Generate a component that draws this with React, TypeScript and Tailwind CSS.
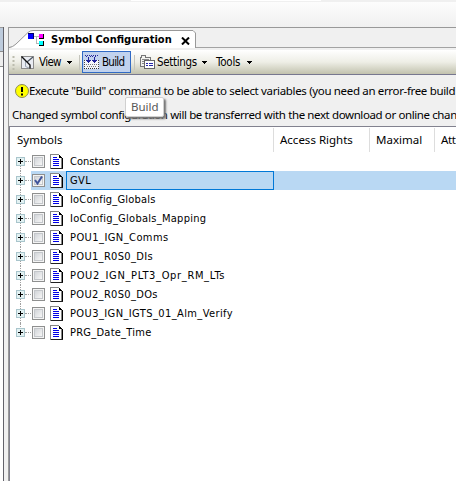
import React from "react";

function Arrow({ className = "" }: { className?: string }) {
  return (
    <svg width="5" height="3" viewBox="0 0 5 3" shapeRendering="crispEdges" className={"mt-px shrink-0 " + className}>
      <path d="M0 0h5v1h-1v1h-1v1h-1v-1h-1v-1h-1z" fill="#000" />
    </svg>
  );
}

function SymbolIcon() {
  return (
    <svg width="16" height="13" viewBox="0 0 16 13" shapeRendering="crispEdges" className="-mt-px shrink-0">
      <path d="M6 3.500h5M8.500 3v8M8 10.500h3" stroke="#b5b5b5" fill="none" />
      <rect width="6" height="6" fill="#00006a" />
      <rect width="5" height="5" y="1" fill="#0000ff" />
      <rect x="11" y="1" width="5" height="5" fill="#000" />
      <rect x="11" y="1" width="4" height="4" fill="#ff00ff" />
      <rect x="11" y="8" width="5" height="5" fill="#000" />
      <rect x="11" y="8" width="4" height="4" fill="#00ffff" />
    </svg>
  );
}

function ViewIcon() {
  return (
    <svg width="13" height="13" viewBox="0 0 13 13" className="shrink-0">
      <rect x=".5" y=".5" width="12" height="12" fill="#e9ecf2" stroke="#8c8c8c" />
      <path d="M6 6L12 1" stroke="#4b5560" strokeWidth="1.200" />
      <path d="M4.500 5V10.500L8 12" stroke="#9aa5b3" fill="none" />
      <path d="M.5 .5L9 9V12.500" stroke="#111" strokeWidth="1.400" fill="none" />
    </svg>
  );
}

function BuildIcon() {
  return (
    <svg width="15" height="14" viewBox="0 0 15 14" shapeRendering="crispEdges" className="shrink-0">
      <path d="M0 5h15v9H0z" fill="#f4f5fa" />
      <path d="M.5 5v9M14.500 5v9" fill="none" stroke="#444" strokeDasharray="1 1" />
      <path d="M0 13.500h15" stroke="#333" strokeDasharray="1 1" />
      <path d="M2 9.500h12M3 11.500h10" stroke="#777" strokeDasharray="1 1" />
      <path d="M1 .5h13M2 1.500h2M6 1.500h3M11 1.500h2" stroke="#28289b" strokeDasharray="1 1" />
      <path d="M4 2h1v3h2v1h-1v1h-1v1h-1v-1h-1v-1h-1v-1h2zM10 2h1v3h2v1h-1v1h-1v1h-1v-1h-1v-1h-1v-1h2z" fill="#22229c" />
    </svg>
  );
}

function SettingsIcon() {
  return (
    <svg width="15" height="14" viewBox="0 0 15 14" shapeRendering="crispEdges" className="shrink-0">
      <path d="M.5 11.500V2.500h1v-2h4v2h5v9z" fill="#f2f2ee" stroke="#777" />
      <path d="M2 4.500h7M2 6.500h3M2 8.500h3" stroke="#888" />
      <rect x="4.500" y="5.500" width="10" height="8" fill="#fff" stroke="#666" />
      <path d="M6 8.500h2M9 8.500h4M6 10.500h2M9 10.500h4" stroke="#2929a8" />
    </svg>
  );
}

function Doc() {
  return (
    <svg width="13" height="15" viewBox="0 0 13 15" shapeRendering="crispEdges" className="-mt-px shrink-0">
      <path d="M0 0h9v1h1v1h1v1h1v12H0z" fill="#858585" />
      <path d="M1 1h8v3h2v10H1z" fill="#fff" />
      <path d="M9 1h1v1h1v1h1v1h1v11h-1V4H9z" fill="#000" />
      <path d="M1 14h12v1H1z" fill="#222" />
      <path d="M3 3.500h4M3 5.500h6M3 7.500h6M3 9.500h6M3 11.500h6" stroke="#0000e8" />
    </svg>
  );
}

function Expander() {
  return (
    <svg width="9" height="9" viewBox="0 0 9 9" shapeRendering="crispEdges" className="relative shrink-0">
      <rect width="9" height="9" rx="1" fill="#a9c5cc" />
      <rect x="1" y="1" width="7" height="7" fill="#e2f1f2" />
      <path d="M2 4.500h5M4.500 2v5" stroke="#000" />
    </svg>
  );
}

function Check({ on }: { on: boolean }) {
  return (
    <span className="flex h-[13px] w-[13px] shrink-0 border border-[#8e8f8f] bg-[#f4f4f4] p-px">
      <span className="h-[9px] w-[9px] border border-[#c4c7cb] bg-linear-to-br from-[#d2d5d9] to-[#f6f6f6]">
        {on && (
          <svg width="9" height="9" viewBox="0 0 9 9" className="-ml-px -mt-px block">
            <path d="M1 4L3.500 7.500L8 .5" fill="none" stroke="#3f549b" strokeWidth="2" />
          </svg>
        )}
      </span>
    </span>
  );
}

const rows = [
  { name: "Constants", sp: "tracking-[0.02px]" },
  { name: "GVL", sp: "tracking-[0.4px]" },
  { name: "IoConfig_Globals", sp: "tracking-[0.2px]" },
  { name: "IoConfig_Globals_Mapping", sp: "tracking-[0.27px]" },
  { name: "POU1_IGN_Comms", sp: "tracking-[0.43px]" },
  { name: "POU1_R0S0_DIs", sp: "tracking-[0.33px]" },
  { name: "POU2_IGN_PLT3_Opr_RM_LTs", sp: "tracking-[0.66px]" },
  { name: "POU2_R0S0_DOs", sp: "tracking-[0.33px]" },
  { name: "POU3_IGN_IGTS_01_Alm_Verify", sp: "tracking-[0.4px]" },
  { name: "PRG_Date_Time", sp: "tracking-[0.25px]" },
];

function Tree() {
  return (
    <div className="font-['DejaVu_Sans_Condensed','DejaVu_Sans',sans-serif] text-[11px]">
      {rows.map((r, i) => {
        const on = i === 1;
        return (
          <div key={r.name} className="relative flex h-[19px] items-center pl-[6px]">
            <span className={"absolute left-[10px] border-l border-dotted border-[#a0a0a0] " + (i === 9 ? "top-0 h-[10px]" : i === 0 ? "top-[9px] h-[10px]" : "top-0 h-[19px]")} />
            <Expander />
            <span className="w-[6px] border-t border-dotted border-[#a0a0a0]" />
            <span className={"flex h-[19px] w-[35px] shrink-0 items-center gap-[5px] pl-px " + (on ? "bg-[#b9d8f3]" : "")}>
              <Check on={on} />
              <Doc />
            </span>
            <span className={"flex h-[19px] shrink-0 items-center whitespace-pre pt-[2px] " + r.sp + " " + (on ? "w-[208px] border border-[#0078d7] bg-[#b9d8f3] pl-[3px]" : "pl-[4px]")}>{r.name}</span>
            {on && <span className="h-[19px] flex-1 bg-[#b9d8f3]" />}
          </div>
        );
      })}
    </div>
  );
}

export default function App() {
  return (
    <div className="flex h-[481px] w-[456px] flex-col overflow-hidden bg-[#f0f0f0] font-['Noto_Sans',sans-serif] text-xs text-black">
      <div className="flex h-[2px] shrink-0"><span className="ml-[131px] h-px w-[190px] bg-white" /></div>
      <div className="h-[25px] shrink-0 bg-linear-to-b from-[#fdfdfd] to-[#f0f0f0]" />
      <div className="flex min-h-0 flex-1">
        <div className="flex w-[4px] shrink-0 flex-col border-r border-[#62626a] bg-white">
          <div className="h-[24px] border-t border-[#999] bg-[#bdcbdc]" />
          <div className="h-[16px] border-y border-[#8c8c8c] bg-[#eee]" />
        </div>
        <div className="w-[4px] shrink-0" />
        <div className="flex min-w-0 flex-1 flex-col border-l border-t border-[#999]">
          <div className="relative h-[20px] shrink-0 border-b border-[#a3a3a3]">
            <svg width="188" height="20" viewBox="0 0 188 20" className="absolute left-0 top-0">
              <path d="M0 20L5 18.500L19 4.500Q21 2.500 24 2.500H184L186.500 5V20Z" fill="#fff" />
              <path d="M0 19.500Q4 19 7 16L19 4.500Q21 2.500 24 2.500H184L186.500 5V20" fill="none" stroke="#999" />
            </svg>
            <div className="relative flex h-[20px] items-center pl-[19px] pt-[4px]">
              <SymbolIcon />
              <span className="ml-[7px] w-[122px] whitespace-pre font-['DejaVu_Sans_Condensed'] text-[11px] font-bold">Symbol Configuration</span>
              <svg width="9" height="8" viewBox="0 0 9 8" className="ml-[8px] mt-px"><path d="M1 .5L8 7.500M8 .5L1 7.500" stroke="#000" strokeWidth="2" /></svg>
            </div>
          </div>
          <div className="mt-[2px] flex h-[25px] shrink-0 items-center whitespace-pre border-b border-[#77778f] bg-linear-to-b from-white via-[#eeeee6] to-[#c2c2ae] font-['DejaVu_Sans_Condensed'] text-[11.5px]">
            <svg width="3" height="15" viewBox="0 0 3 15" className="ml-[3px] shrink-0"><path d="M1.500 1v14" stroke="#bcbcae" strokeWidth="2" strokeDasharray="2 2" /></svg>
            <span className="ml-[6px]"><ViewIcon /></span>
            <span className="ml-[5px] w-[22px] shrink-0 pt-px tracking-[-0.65px]">View</span>
            <Arrow className="ml-[6px]" />
            <span className="ml-[7px] h-[15px] w-px bg-[#c5c5bd]" />
            <span className="ml-[2px] flex h-[22px] w-[49px] shrink-0 items-center border border-[#316ac5] bg-[#c1d2ee] pl-px">
              <BuildIcon /><span className="ml-[3px] pt-px tracking-[-0.75px]">Build</span>
            </span>
            <span className="ml-[3px] h-[15px] w-px bg-[#c5c5bd]" />
            <span className="ml-[5px]"><SettingsIcon /></span>
            <span className="ml-[2px] w-[40px] shrink-0 pt-px tracking-[-0.32px]">Settings</span>
            <Arrow className="ml-[5px]" />
            <span className="ml-[9px] w-[26px] shrink-0 pt-px tracking-[-0.2px]">Tools</span>
            <Arrow className="ml-[5px]" />
          </div>
          <div className="relative h-[51px] shrink-0 whitespace-pre text-[11.5px]">
            <div className="flex h-[31px] items-center pl-[6px] tracking-[-0.34px]">
              <svg width="14" height="14" viewBox="0 0 14 14" className="shrink-0"><circle cx="7" cy="7" r="6.500" fill="#ffff00" stroke="#8b8b55" /><path d="M7 3v5M7 9.500v2" stroke="#000" strokeWidth="2" /></svg>
              <span>Execute "Build" command to be able to select variables (you need an error-free build</span>
            </div>
            <div className="flex h-[18px] items-center pl-[3px] tracking-[-0.39px]">Changed symbol configuration will be transferred with the next download or online chan</div>
            <div className="absolute left-[116px] top-[22px] flex h-[20px] w-[39px] items-center rounded-[2px] border border-[#d0d0d0] bg-white pl-[5px] text-[#575757] shadow-[2px_2px_2px_#777]">Build</div>
          </div>
          <div className="flex-1 border-l border-t border-[#82828f] bg-white">
            <div className="flex h-[25px] items-center whitespace-pre pl-[7px] text-[11.5px] *:shrink-0">
              <span className="w-[256px]">Symbols</span>
              <span className="h-[24px] w-px bg-[#ddd]" />
              <span className="w-[95px] pl-[6px]">Access Rights</span>
              <span className="h-[24px] w-px bg-[#ddd]" />
              <span className="w-[64px] pl-[6px]">Maximal</span>
              <span className="h-[24px] w-px bg-[#ddd]" />
              <span className="pl-[6px] tracking-[-0.4px]">Att</span>
            </div>
            <Tree />
          </div>
        </div>
      </div>
    </div>
  );
}
